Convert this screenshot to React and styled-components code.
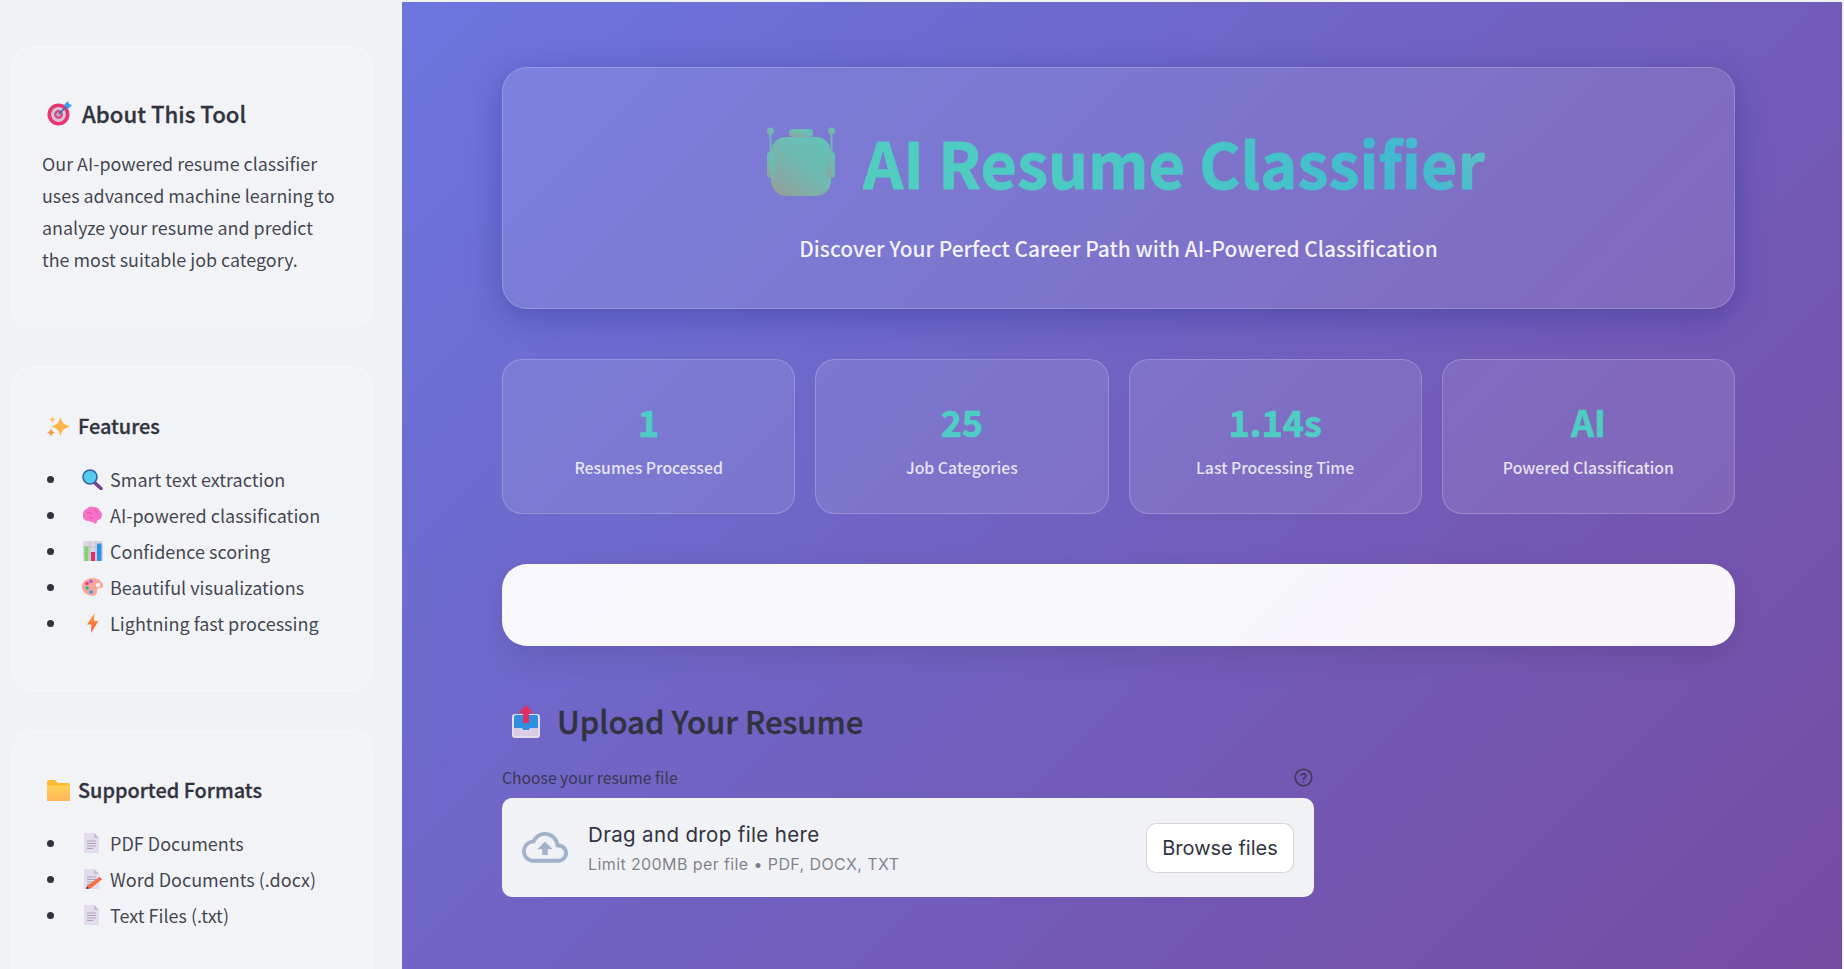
import React from "react";
import styled, { createGlobalStyle } from "styled-components";

const SANS = `"Noto Sans CJK SC", "Noto Sans", sans-serif`;
const INK = "#31333f";

const GlobalStyle = createGlobalStyle`
  html, body { margin: 0; padding: 0; background: #f0f2f6; }
  * { box-sizing: border-box; }
  body { font-family: ${SANS}; color: ${INK}; }
`;

const Page = styled.div`
  display: flex;
  height: 969px;
  padding-right: 2px;
  overflow: hidden;
`;
const Sidebar = styled.aside`
  flex: 0 0 402px;
  padding: 47px 30px 0 12px;
  background: #f0f2f6;
`;
const SideCard = styled.section`
  height: ${(p) => p.$height}px;
  margin-bottom: 40px;
  padding: ${(p) => p.$top}px 30px 0;
  background: rgba(255, 255, 255, 0.1);
  border: 1px solid rgba(255, 255, 255, 0.35);
  border-radius: 20px;
`;
const SideTitle = styled.h3`
  display: flex;
  align-items: center;
  gap: ${(p) => (p.$large ? 9 : 8)}px;
  margin: 0 0 ${(p) => p.$gap}px 4px;
  font-size: ${(p) => (p.$large ? 22.2 : 19.9)}px;
  line-height: 32px;
  font-weight: 500;
  -webkit-text-stroke: 0.3px ${INK};
  color: ${INK};
`;
const SideText = styled.p`
  margin: 0 0 0 -1px;
  font-size: 17.9px;
  line-height: 32px;
  color: rgba(49, 51, 63, 0.92);
`;
const SideList = styled.ul`
  margin: 0;
  padding: 0;
  list-style: none;
`;
const SideItem = styled.li`
  display: flex;
  align-items: center;
  height: 36px;
  font-size: 18px;
  white-space: nowrap;
  color: rgba(49, 51, 63, 0.92);
  &::before {
    content: "";
    flex: none;
    width: 7px;
    height: 7px;
    margin: 0 28px 0 4px;
    border-radius: 50%;
    background: ${INK};
  }
`;
const ItemIcon = styled.span`
  display: flex;
  justify-content: center;
  flex: none;
  width: 21px;
  margin-right: 7px;
`;

const Main = styled.main`
  flex: 1;
  margin-top: 2px;
  padding: 65px 107px 0 100px;
  background: linear-gradient(135deg, #6b76de 0%, #764ba2 100%);
`;
const Hero = styled.header`
  display: flex;
  flex-direction: column;
  align-items: center;
  height: 242px;
  padding-top: 54px;
  background: rgba(255, 255, 255, 0.1);
  border: 1px solid rgba(255, 255, 255, 0.2);
  border-radius: 25px;
  box-shadow: 0 8px 32px rgba(31, 38, 135, 0.37);
`;
const HeroTitle = styled.h1`
  display: flex;
  align-items: center;
  gap: 27px;
  margin: 0 0 0 14px;
  height: 80px;
  font-size: 62.8px;
  line-height: 80px;
  font-weight: 700;
`;
const HeroText = styled.span`
  color: transparent;
  background: linear-gradient(60deg, #52cec0 0%, #48c6c6 55%, #42b9d0 85%, #5cc2c2 100%);
  -webkit-background-clip: text;
  background-clip: text;
  -webkit-text-stroke: 1px transparent;
`;
const HeroSub = styled.p`
  margin: 30px 0 0;
  font-size: 20.9px;
  line-height: 32px;
  font-weight: 500;
  color: rgba(255, 255, 255, 0.92);
`;
const StatGrid = styled.div`
  display: grid;
  grid-template-columns: repeat(4, 1fr);
  gap: 20px;
  margin-top: 50px;
`;
const StatCard = styled.div`
  display: flex;
  flex-direction: column;
  align-items: center;
  height: 155px;
  padding-top: 39px;
  background: rgba(255, 255, 255, 0.1);
  border: 1px solid rgba(255, 255, 255, 0.2);
  border-radius: 20px;
`;
const StatValue = styled.div`
  font-size: 36px;
  line-height: 44px;
  font-weight: 700;
  -webkit-text-stroke: 0.7px #4ecdc4;
  color: #4ecdc4;
`;
const StatLabel = styled.div`
  margin-top: 12px;
  font-size: 15.8px;
  line-height: 26px;
  font-weight: 500;
  color: rgba(255, 255, 255, 0.82);
`;
const WhiteBar = styled.div`
  height: 82px;
  margin-top: 50px;
  background: rgba(255, 255, 255, 0.95);
  border-radius: 25px;
  box-shadow: 0 10px 30px rgba(0, 0, 0, 0.1);
`;
const UploadBlock = styled.section`
  width: 812px;
  margin-top: 54px;
`;
const UploadTitle = styled.h2`
  display: flex;
  align-items: center;
  gap: 16px;
  margin: 0 0 0 9px;
  height: 42px;
  font-size: 31px;
  line-height: 42px;
  font-weight: 500;
  -webkit-text-stroke: 0.4px ${INK};
  color: ${INK};
`;
const LabelRow = styled.div`
  display: flex;
  justify-content: space-between;
  align-items: center;
  height: 24px;
  margin-top: 23px;
  padding-right: 1px;
  font-size: 15.7px;
  color: rgba(49, 51, 63, 0.9);
`;
const DropZone = styled.div`
  display: flex;
  align-items: center;
  height: 99px;
  margin-top: 9px;
  padding: 0 20px;
  font-family: Inter, sans-serif;
  background: #f0f2f6;
  border-radius: 10px;
`;
const DropCopy = styled.div`
  flex: 1;
  margin-left: 20px;
`;
const DropTitle = styled.div`
  font-size: 20.500px;
  letter-spacing: 0.35px;
  line-height: 28px;
  color: ${INK};
`;
const DropHint = styled.div`
  margin-top: 4px;
  font-size: 16px;
  letter-spacing: 0.4px;
  line-height: 22px;
  color: rgba(49, 51, 63, 0.6);
`;
const BrowseButton = styled.button`
  width: 148px;
  height: 50px;
  font-family: Inter, sans-serif;
  font-size: 20px;
  color: ${INK};
  background: #fff;
  border: 1px solid rgba(49, 51, 63, 0.2);
  border-radius: 10px;
`;

const Target = () => (
  <svg width="26" height="26" viewBox="0 0 26 26">
    <circle cx="11.500" cy="14.500" r="11" fill="#e8356f" />
    <circle cx="11.500" cy="14.500" r="7.400" fill="#d9c3d8" />
    <circle cx="11.500" cy="14.500" r="4.400" fill="#d8487f" />
    <circle cx="11.500" cy="14.500" r="2.200" fill="#b9a8c4" />
    <path d="M12 14 L21 5" stroke="#2f6fb0" strokeWidth="1.600" />
    <path d="M17 5l4-4 1 3 3 1-4 4z" fill="#34a0ef" />
  </svg>
);
const Sparkles = () => (
  <svg width="23" height="21" viewBox="0 0 23 21">
    <path d="M13.500 .5c1.200 6 3.200 8 9.500 10-6.300 2-8.300 4-9.500 10-1.200-6-3.200-8-9.500-10 6.300-2 8.300-4 9.500-10z" fill="#fdb54b" />
    <path d="M5.500 0c.5 2.200 1.200 3 3.300 3.600-2.100.6-2.800 1.400-3.300 3.600-.5-2.200-1.200-3-3.300-3.600 2.100-.6 2.800-1.400 3.300-3.600z" fill="#fcc25d" />
    <path d="M4 12c.6 2.800 1.500 3.600 4 4.400-2.500.8-3.400 1.600-4 4.400-.6-2.800-1.500-3.600-4-4.400 2.500-.8 3.400-1.600 4-4.400z" fill="#f59a45" />
  </svg>
);
const Magnifier = () => (
  <svg width="21" height="21" viewBox="0 0 21 21">
    <path d="M12 13l7 6.500" stroke="#7a3f8f" strokeWidth="3.600" strokeLinecap="round" />
    <circle cx="8" cy="8" r="7" fill="#55cdec" stroke="#3a5ea8" strokeWidth="1.600" />
  </svg>
);
const Brain = () => (
  <svg width="21" height="21" viewBox="0 0 21 21">
    <path d="M1 9c0-3 2-5 4-5 1-2 4-3 6-2 3-.5 6 1 7 4 2 1 2.500 4 1.500 6-.5 2-2 3-4 3l-1 3c-1 1-3 1-3-1-2 .5-3 0-4-1-3 .5-6-1-6.500-4z" fill="#f572c8" />
    <path d="M5 8c2-1 4 0 5 1m2-4c2 0 3 1 3 3m-8 4c2 0 3 1 4 2" stroke="#d64fa6" strokeWidth="1" fill="none" />
  </svg>
);
const BarChart = () => (
  <svg width="20" height="20" viewBox="0 0 20 20">
    <rect width="20" height="20" rx="1.500" fill="#dcd6e6" />
    <path d="M0 6h20M0 12h20M7 0v20M13 0v20" stroke="#b9b3c6" strokeWidth=".7" />
    <rect x="1.500" y="5.500" width="4" height="14.500" fill="#7ed66a" />
    <rect x="8" y="11" width="4" height="9" fill="#e32d6f" />
    <rect x="14" y="2.500" width="4.500" height="17.500" fill="#2a94e6" />
  </svg>
);
const Palette = () => (
  <svg width="21" height="20" viewBox="0 0 21 20">
    <path d="M10 1c6 0 11 3.500 11 8 0 2-2.500 2-4.500 2.200-2 .3-1.500 2-1.500 3.500 0 2-1.500 4-5 4-5 0-10-4-10-9S5 1 10 1z" fill="#f8a79a" />
    <circle cx="16" cy="8" r="2.200" fill="#f6f4f6" />
    <circle cx="9" cy="4.500" r="1.800" fill="#b05cd6" />
    <circle cx="5" cy="6.500" r="1.800" fill="#e6407c" />
    <circle cx="5" cy="11" r="1.800" fill="#2ab8a8" />
    <circle cx="9" cy="15" r="1.800" fill="#3a96ea" />
  </svg>
);
const Bolt = () => (
  <svg width="12" height="20" viewBox="0 0 12 20">
    <defs>
      <linearGradient id="boltFill" x1="0" y1="0" x2="0" y2="1">
        <stop offset="0" stopColor="#fdaa3d" />
        <stop offset="1" stopColor="#f2553a" />
      </linearGradient>
    </defs>
    <path d="M7.500 0L0 11.500h4.500L4 20l7.500-12H7z" fill="url(#boltFill)" />
  </svg>
);
const PageIcon = ({ children }) => (
  <svg width="21" height="20" viewBox="0 0 21 20">
    <path d="M2 0h10l5 5v15H2z" fill="#e3dced" />
    <path d="M12 0l5 5h-5z" fill="#c6bfd2" />
    <path d="M5 8h9M5 10.500h9M5 13h9M5 15.500h6" stroke="#a79eb5" strokeWidth=".9" />
    {children}
  </svg>
);
const Memo = () => (
  <PageIcon>
    <path d="M5 17l11-8 2.500 2.500-10 8H5z" fill="#f9703c" />
    <path d="M16 9l1.500-1 2.500 2.500-1.500 1z" fill="#f2464a" />
    <path d="M5 17l-1 3 3-.5z" fill="#4a3a3a" />
  </PageIcon>
);
const Folder = () => (
  <svg width="23" height="21" viewBox="0 0 23 21">
    <defs>
      <linearGradient id="folderFill" x1="0" y1="0" x2="0" y2="1">
        <stop offset="0" stopColor="#ffd257" />
        <stop offset="1" stopColor="#feb35a" />
      </linearGradient>
    </defs>
    <path d="M0 2a2 2 0 0 1 2-2h6l3 3h10a2 2 0 0 1 2 2v16H0z" fill="#fdb932" />
    <path d="M0 5.500h23V21H0z" fill="url(#folderFill)" />
  </svg>
);
const Outbox = () => (
  <svg width="30" height="33" viewBox="0 0 30 33">
    <rect x="1" y="9" width="28" height="24" rx="3" fill="#e6dced" />
    <rect x="3" y="10" width="24" height="15" rx="2" fill="#2e8fe0" />
    <path d="M3 23h8l2 3h4l2-3h8v8H3z" fill="#d9cce3" />
    <path d="M15 0l7 8h-4v10h-6V8H8z" fill="#e62d62" />
  </svg>
);
const Robot = () => (
  <svg width="70" height="70" viewBox="0 0 70 70">
    <defs>
      <linearGradient id="robotFill" x1="0.1" y1="1" x2="0.9" y2="0">
        <stop offset="0" stopColor="#929f99" />
        <stop offset="0.55" stopColor="#6fbab2" />
        <stop offset="1" stopColor="#62c2b6" />
      </linearGradient>
    </defs>
    <g fill="url(#robotFill)">
      <circle cx="4.500" cy="4" r="3.500" />
      <circle cx="65.500" cy="4" r="3.500" />
      <rect x="3.600" y="6" width="1.800" height="26" />
      <rect x="64.600" y="6" width="1.800" height="26" />
      <rect x="23" y="2" width="24" height="8" rx="4" />
      <rect x="5" y="10" width="60" height="59" rx="15" />
      <rect x="1" y="25" width="8" height="26" rx="3" />
      <rect x="61" y="25" width="8" height="26" rx="3" />
    </g>
  </svg>
);
const CloudUpload = () => (
  <svg width="46" height="32" viewBox="0 0 24 16.700" fill="#a3b2cb">
    <path d="M19.350 6.040A7.490 7.490 0 0 0 12 0C9.110 0 6.600 1.640 5.350 4.040A5.994 5.994 0 0 0 0 10c0 3.310 2.690 6 6 6h13c2.760 0 5-2.240 5-5 0-2.640-2.050-4.780-4.650-4.960zM19 14H6c-2.210 0-4-1.790-4-4 0-2.050 1.530-3.760 3.560-3.970l1.070-.11.500-.95A5.469 5.469 0 0 1 12 2c2.620 0 4.880 1.860 5.390 4.430l.300 1.500 1.530.11A2.980 2.980 0 0 1 22 11c0 1.650-1.350 3-3 3zM8 9h2.550v3h2.900V9H16l-4-4z" />
  </svg>
);
const HelpIcon = () => (
  <svg width="19" height="19" viewBox="0 0 24 24" fill="none" stroke="rgba(49,51,63,0.8)" strokeWidth="2" strokeLinecap="round">
    <circle cx="12" cy="12" r="10.500" />
    <path d="M9 9.200a3 3 0 0 1 5.800 1c0 2-2.800 2.300-2.800 4" />
    <path d="M12 17.600v.1" />
  </svg>
);

const features = [
  [<Magnifier />, "Smart text extraction"],
  [<Brain />, "AI-powered classification"],
  [<BarChart />, "Confidence scoring"],
  [<Palette />, "Beautiful visualizations"],
  [<Bolt />, "Lightning fast processing"],
];
const formats = [
  [<PageIcon />, "PDF Documents"],
  [<Memo />, "Word Documents (.docx)"],
  [<PageIcon />, "Text Files (.txt)"],
];
const stats = [
  ["1", "Resumes Processed"],
  ["25", "Job Categories"],
  ["1.14s", "Last Processing Time"],
  ["AI", "Powered Classification"],
];

const renderItems = (items) =>
  items.map(([icon, label]) => (
    <SideItem key={label}>
      <ItemIcon>{icon}</ItemIcon>
      {label}
    </SideItem>
  ));

export default function App() {
  return (
    <Page>
      <GlobalStyle />
      <Sidebar>
        <SideCard $height={280} $top={49}>
          <SideTitle $large $gap={18}>
            <Target />
            About This Tool
          </SideTitle>
          <SideText>
            Our AI-powered resume classifier uses advanced machine learning to analyze your resume and predict the most suitable job category.
          </SideText>
        </SideCard>
        <SideCard $height={324} $top={42}>
          <SideTitle $gap={19}>
            <Sparkles />
            Features
          </SideTitle>
          <SideList>{renderItems(features)}</SideList>
        </SideCard>
        <SideCard $height={270} $top={42}>
          <SideTitle $gap={19}>
            <Folder />
            Supported Formats
          </SideTitle>
          <SideList>{renderItems(formats)}</SideList>
        </SideCard>
      </Sidebar>
      <Main>
        <Hero>
          <HeroTitle>
            <Robot />
            <HeroText>AI Resume Classifier</HeroText>
          </HeroTitle>
          <HeroSub>Discover Your Perfect Career Path with AI-Powered Classification</HeroSub>
        </Hero>
        <StatGrid>
          {stats.map(([value, label]) => (
            <StatCard key={label}>
              <StatValue>{value}</StatValue>
              <StatLabel>{label}</StatLabel>
            </StatCard>
          ))}
        </StatGrid>
        <WhiteBar />
        <UploadBlock>
          <UploadTitle>
            <Outbox />
            Upload Your Resume
          </UploadTitle>
          <LabelRow>
            Choose your resume file
            <HelpIcon />
          </LabelRow>
          <DropZone>
            <CloudUpload />
            <DropCopy>
              <DropTitle>Drag and drop file here</DropTitle>
              <DropHint>Limit 200MB per file • PDF, DOCX, TXT</DropHint>
            </DropCopy>
            <BrowseButton>Browse files</BrowseButton>
          </DropZone>
        </UploadBlock>
      </Main>
    </Page>
  );
}
